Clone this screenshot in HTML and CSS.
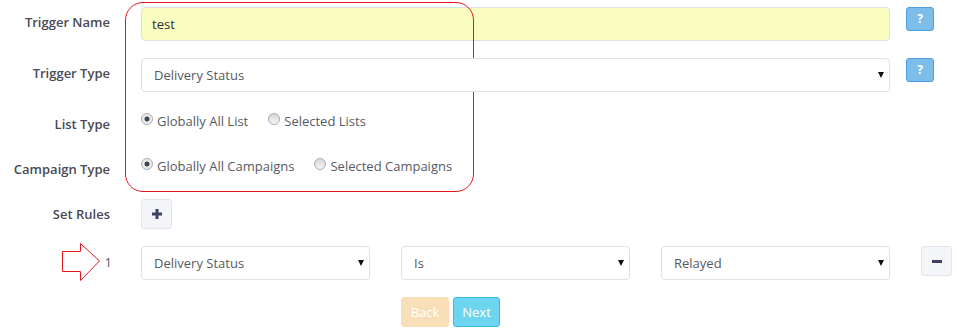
FILE: index.html
```html
<!DOCTYPE html>
<html lang="en">
<head>
    <meta charset="UTF-8">
    <title>Trigger Setup</title>
    <link rel="stylesheet" href="styles.css">
</head>
<body>
    <div class="form">
        <div class="highlight"></div>

        <div class="row row-name">
            <label class="label">Trigger Name</label>
            <div class="field">
                <input type="text" class="input input-yellow" value="test">
            </div>
            <button class="help">?</button>
        </div>

        <div class="row row-type">
            <label class="label">Trigger Type</label>
            <div class="field select-wrap">
                <select class="input">
                    <option>Delivery Status</option>
                </select>
            </div>
            <button class="help">?</button>
        </div>

        <div class="row row-list">
            <label class="label">List Type</label>
            <div class="field radios">
                <label class="radio"><input type="radio" name="list" checked> Globally All List</label>
                <label class="radio"><input type="radio" name="list"> Selected Lists</label>
            </div>
        </div>

        <div class="row row-campaign">
            <label class="label">Campaign Type</label>
            <div class="field radios">
                <label class="radio"><input type="radio" name="camp" checked> Globally All Campaigns</label>
                <label class="radio"><input type="radio" name="camp"> Selected Campaigns</label>
            </div>
        </div>

        <div class="row row-rules">
            <label class="label">Set Rules</label>
            <div class="field">
                <button class="icon-btn">
                    <svg width="10" height="10" viewBox="0 0 10 10"><rect x="0" y="3.5" width="10" height="3" fill="#3b4263"/><rect x="3.5" y="0" width="3" height="10" fill="#3b4263"/></svg>
                </button>
            </div>
        </div>

        <div class="row row-rule">
            <div class="label rule-num">
                <svg class="pointer" width="40" height="40" viewBox="0 0 40 40"><polygon points="0.5,8.5 18.5,8.5 18.5,0.5 37.5,18 18.5,37.5 18.5,28.5 0.5,28.5" fill="none" stroke="#e3161d" stroke-width="1"/></svg>
                1
            </div>
            <div class="field rule-fields">
                <div class="select-wrap"><select class="input"><option>Delivery Status</option></select></div>
                <div class="select-wrap"><select class="input"><option>Is</option></select></div>
                <div class="select-wrap"><select class="input"><option>Relayed</option></select></div>
            </div>
            <button class="icon-btn minus">
                <svg width="10" height="3" viewBox="0 0 10 3"><rect width="10" height="3" fill="#3b4263"/></svg>
            </button>
        </div>

        <div class="row row-actions">
            <div class="label"></div>
            <div class="field actions">
                <button class="btn btn-back" disabled>Back</button>
                <button class="btn btn-next">Next</button>
            </div>
        </div>
    </div>
</body>
</html>
```

FILE: styles.css
```css
body { margin: 0; font-family: "Open Sans", Arial, sans-serif; font-size: 13px; color: #575962; background: #fff; }
.form { position: relative; padding-top: 7px; }
.highlight { position: absolute; left: 125px; top: 2px; width: 347px; height: 188px; border: 1px solid #e3161d; border-radius: 18px; pointer-events: none; }

.row { display: flex; align-items: center; }
.label { width: 110px; margin-right: 31px; text-align: right; color: #484a56; font-weight: 600; }
.field { width: 749px; }

.row-name { height: 34px; margin-bottom: 17px; align-items: flex-start; }
.row-name .label, .row-type .label { line-height: 31px; }
.row-type { height: 34px; margin-bottom: 12px; align-items: flex-start; }
.row-list { height: 40px; margin-bottom: 5px; }
.row-campaign { height: 40px; margin-bottom: 10px; }
.row-rules { height: 30px; margin-bottom: 17px; }
.row-rule { height: 34px; margin-bottom: 17px; }
.row-actions { height: 30px; }

.input { box-sizing: border-box; width: 100%; height: 34px; border: 1px solid #dde2ea; border-radius: 4px; background: #fff; font-family: inherit; font-size: 13px; color: #575962; padding: 0 12px; outline: none; }
.input-yellow { background: #f9fdc0; color: #2e2f36; padding-left: 10px; }
select.input { -webkit-appearance: none; appearance: none; }
.select-wrap { position: relative; }
.select-wrap::after { content: ""; position: absolute; right: 6px; top: 14px; border-left: 3.5px solid transparent; border-right: 3.5px solid transparent; border-top: 6px solid #111; pointer-events: none; }

.help { margin-left: 16px; width: 28px; height: 24px; padding: 0; border: 1px solid #4ca0e0; border-radius: 3px; background: #7dbde9; color: #fff; font-family: inherit; font-weight: 700; font-size: 12px; line-height: 20px; }

.radios { display: flex; gap: 20px; padding-bottom: 6px; }
.radio { display: flex; align-items: center; gap: 4px; color: #575962; }
.radio input { -webkit-appearance: none; appearance: none; margin: 0; width: 12px; height: 12px; border: 1px solid #a9abb0; border-radius: 50%; background: linear-gradient(#d7d8db, #f6f6f7); position: relative; top: -2px; }
.radio input:checked { background: radial-gradient(circle, #44464d 0 2.2px, #e7e8ea 2.8px, #f4f4f5); }

.icon-btn { width: 31px; height: 30px; padding: 0; border: 1px solid #e2e5ec; border-radius: 3px; background: #f4f5f8; display: flex; align-items: center; justify-content: center; }
.minus { margin-left: 31px; height: 30px; align-self: flex-start; }

.rule-num { position: relative; width: 112px; margin-right: 29px; color: #575962; font-weight: 400; margin-top: -2px; }
.pointer { position: absolute; left: 62px; top: -10px; }
.rule-fields { display: flex; gap: 31px; }
.rule-fields .select-wrap { width: 229px; }

.actions { display: flex; gap: 4px; padding-left: 260px; box-sizing: border-box; }
.btn { height: 30px; padding: 0; border-radius: 3px; font-family: inherit; font-size: 13px; color: #fff; }
.btn-back { width: 48px; background: #f9dfb8; border: 1px solid #f9dfb8; }
.btn-next { width: 47px; background: #6dd5ee; border: 1px solid #38bee3; }
```
